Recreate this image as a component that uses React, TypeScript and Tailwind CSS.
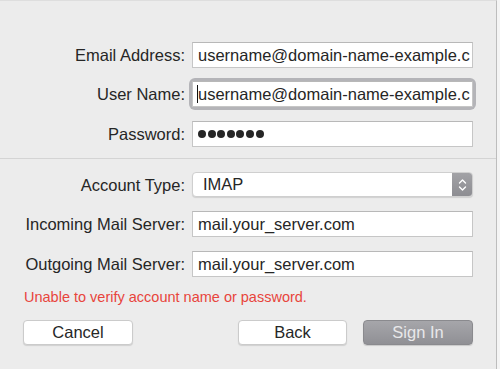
import React from "react";

const font = { fontFamily: '"Liberation Sans", Arial, sans-serif' };

export default function App() {
  return (
    <div
      className="flex h-[369px] w-[500px] overflow-hidden bg-[#f4f4f4] antialiased"
      style={font}
    >
      <div className="flex h-full w-[497px] flex-col border-r border-t border-r-[#bdbdbd] border-t-[#dedede] bg-[#ececec] pt-[41px]">
        {/* Account details */}
        <FieldRow label="Email Address:">
          <TextBox value="username@domain-name-example.c" />
        </FieldRow>

        <div className="mt-[13px]">
          <FieldRow label="User Name:">
            <div className="relative w-full rounded-[3px] ring-[3px] ring-[#b4b4b8]">
              <TextBox value="username@domain-name-example.c" />
              <span className="absolute left-[5px] top-[4px] h-[18px] w-px bg-[#111]" />
            </div>
          </FieldRow>
        </div>

        <div className="mt-[14px]">
          <FieldRow label="Password:">
            <div className="flex h-[26px] w-full items-center gap-[1.6px] border border-[#c6c6c6] border-t-[#b8b8b8] bg-white pl-[5px]">
              {Array.from({ length: 7 }).map((_, i) => (
                <span key={i} className="h-[8px] w-[8px] rounded-full bg-[#262626]" />
              ))}
            </div>
          </FieldRow>
        </div>

        <div className="mt-[11px] h-px w-full bg-[#d4d4d4]" />

        {/* Server settings */}
        <div className="mt-[13px]">
          <FieldRow label="Account Type:">
            <div className="flex h-[25px] w-full overflow-hidden rounded-[4px] border border-[#cfcfcf] bg-white shadow-[0_1px_1px_rgba(0,0,0,0.12)]">
              <span className="flex flex-1 items-center pl-[10px] text-[16.5px] text-[#262626]">IMAP</span>
              <span className="flex w-[20px] items-center justify-center bg-gradient-to-b from-[#a2a2a6] to-[#8d8d92]">
                <svg width="9" height="14" viewBox="0 0 9 14" fill="none" stroke="white" strokeWidth="1.4" strokeLinecap="round" strokeLinejoin="round">
                  <path d="M1.5 5 L4.5 2 L7.5 5" />
                  <path d="M1.5 9 L4.5 12 L7.5 9" />
                </svg>
              </span>
            </div>
          </FieldRow>
        </div>

        <div className="mt-[14px]">
          <FieldRow label="Incoming Mail Server:">
            <TextBox value="mail.your_server.com" />
          </FieldRow>
        </div>

        <div className="mt-[14px]">
          <FieldRow label="Outgoing Mail Server:">
            <TextBox value="mail.your_server.com" />
          </FieldRow>
        </div>

        <p className="mt-[12px] pl-[24px] text-[14.5px] leading-[16px] text-[#e8453c]">
          Unable to verify account name or password.
        </p>

        {/* Actions */}
        <div className="mt-[15px] flex pl-[23px]">
          <PlainButton label="Cancel" className="w-[110px]" />
          <PlainButton label="Back" className="ml-[105px] w-[109px]" />
          <button className="ml-[16px] flex h-[25px] w-[110px] items-center justify-center rounded-[4px] border border-[#8a8a8e] bg-gradient-to-b from-[#a6a6aa] to-[#909095] text-[16.5px] text-[#e8e8ea] shadow-[0_1px_1px_rgba(0,0,0,0.15)]">
            Sign In
          </button>
        </div>
      </div>
    </div>
  );
}

function FieldRow({ label, children }: { label: string; children: React.ReactNode }) {
  return (
    <div className="flex items-center">
      <label className="w-[185px] shrink-0 whitespace-nowrap text-right text-[16.5px] leading-[20px] text-[#262626]">
        {label}
      </label>
      <div className="ml-[7px] flex w-[281px]">{children}</div>
    </div>
  );
}

function TextBox({ value }: { value: string }) {
  return (
    <div className="flex h-[26px] w-full items-center overflow-hidden whitespace-nowrap border border-[#c6c6c6] border-t-[#b8b8b8] bg-white pl-[5px] text-[16.5px] text-[#262626]">
      {value}
    </div>
  );
}

function PlainButton({ label, className }: { label: string; className?: string }) {
  return (
    <button
      className={`flex h-[25px] items-center justify-center rounded-[4px] border border-[#cbcbcb] bg-white text-[16.5px] text-[#262626] shadow-[0_1px_1px_rgba(0,0,0,0.12)] ${className ?? ""}`}
    >
      {label}
    </button>
  );
}
